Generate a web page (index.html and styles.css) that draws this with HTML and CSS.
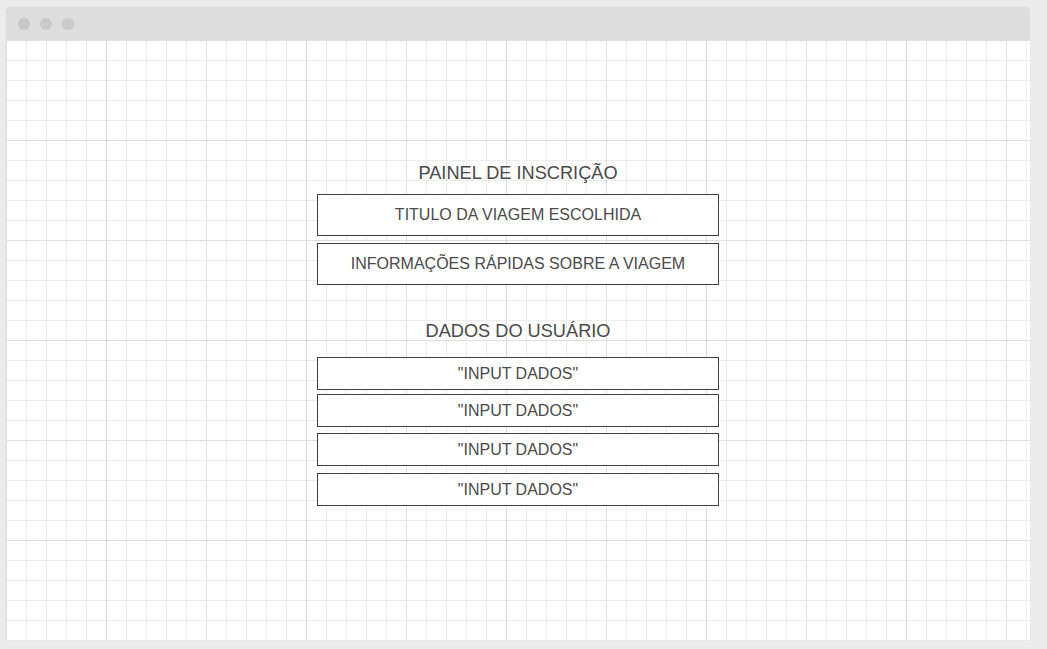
FILE: index.html
```html
<!DOCTYPE html>
<html lang="pt">
<head>
<meta charset="utf-8">
<title>Painel de Inscrição</title>
<link rel="stylesheet" href="styles.css">
</head>
<body>
<div class="window">
  <div class="titlebar">
    <span class="dot"></span><span class="dot"></span><span class="dot"></span>
  </div>
  <div class="canvas">
    <div class="panel">
      <h2 class="heading">PAINEL DE INSCRIÇÃO</h2>
      <div class="box box-lg">TITULO DA VIAGEM ESCOLHIDA</div>
      <div class="box box-lg box-second">INFORMAÇÕES RÁPIDAS SOBRE A VIAGEM</div>
      <h2 class="heading heading-user">DADOS DO USUÁRIO</h2>
      <div class="box box-sm">"INPUT DADOS"</div>
      <div class="box box-sm gap-a">"INPUT DADOS"</div>
      <div class="box box-sm gap-b">"INPUT DADOS"</div>
      <div class="box box-sm gap-c">"INPUT DADOS"</div>
    </div>
  </div>
</div>
</body>
</html>
```
FILE: styles.css
```css
* { box-sizing: border-box; }
html, body { margin: 0; padding: 0; }
body {
  background: #ececec;
  font-family: "Liberation Sans", Arial, sans-serif;
  width: 1047px;
  height: 649px;
  overflow: hidden;
}
.window {
  margin: 7px 0 0 6px;
  width: 1024px;
  border-radius: 5px 5px 0 0;
  overflow: hidden;
  box-shadow: 0 0 1px rgba(0,0,0,0.18);
}
.titlebar {
  height: 33px;
  background: #dddddd;
  display: flex;
  align-items: center;
  gap: 10px;
  padding-left: 12px;
}
.dot {
  width: 12px;
  height: 12px;
  border-radius: 50%;
  background: #c9c9c9;
}
.canvas {
  height: 600px;
  background-color: #ffffff;
  background-image:
    linear-gradient(to right, #dedede 1px, transparent 1px),
    linear-gradient(to bottom, #dedede 1px, transparent 1px),
    linear-gradient(to right, #ededed 1px, transparent 1px),
    linear-gradient(to bottom, #ededed 1px, transparent 1px);
  background-size: 100px 100px, 100px 100px, 20px 20px, 20px 20px;
  display: flex;
  justify-content: center;
  padding-top: 122px;
}
.panel {
  width: 402px;
  display: flex;
  flex-direction: column;
}
.heading {
  margin: 0 0 10px;
  font-weight: normal;
  font-size: 18.2px;
  line-height: 22px;
  color: #4a4a4a;
  text-align: center;
}
.heading-user {
  margin-top: 35px;
  margin-bottom: 15px;
}
.box {
  border: 1px solid #404040;
  background: #ffffff;
  color: #4a4a4a;
  font-size: 16px;
  display: flex;
  align-items: center;
  justify-content: center;
}
.box-lg { height: 42px; padding-bottom: 1px; }
.box-second { margin-top: 7px; }
.box-sm { height: 33px; }
.gap-a { margin-top: 4px; }
.gap-b { margin-top: 6px; }
.gap-c { margin-top: 7px; }
```
